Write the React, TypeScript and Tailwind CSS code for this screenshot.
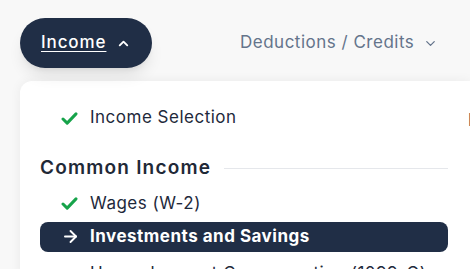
import { ChevronUp, ChevronDown, ArrowRight } from 'lucide-react';

function Check() {
  return (
    <svg viewBox="0 0 18 14" className="w-[17px] h-[13px]" fill="none">
      <path d="M2 7.5 L6.5 12 L16 2" stroke="#16a34a" strokeWidth="3.2" strokeLinecap="round" strokeLinejoin="round" />
    </svg>
  );
}

interface ItemProps {
  label: string;
  icon: 'check' | 'arrow' | 'dot';
  active?: boolean;
  className?: string;
}

function MenuItem({ label, icon, active, className = '' }: ItemProps) {
  return (
    <div
      className={`flex items-center h-[30px] rounded-lg pl-[21px] ${
        active ? 'bg-[#202e46] text-white font-bold' : 'text-[#1e293b]'
      } ${className}`}
    >
      <div className="w-[29px] flex items-center">
        {icon === 'check' && <Check />}
        {icon === 'arrow' && <ArrowRight className="w-[19px] h-[19px]" strokeWidth={2.4} />}
        {icon === 'dot' && <div className="ml-[10px] w-[5px] h-[5px] rounded-full bg-gray-400" />}
      </div>
      <span className="text-[17px] tracking-[0.5px] whitespace-nowrap">{label}</span>
    </div>
  );
}

export default function App() {
  return (
    <div className="w-[470px] h-[269px] overflow-hidden bg-[#f8f8f8] font-['Inter',sans-serif]">
      {/* Top nav */}
      <div className="flex items-center pt-[18px] pl-5">
        <button className="h-[50px] w-[132px] rounded-full bg-[#202e46] text-white flex items-center pl-[21px] gap-[10px] shadow-lg">
          <span className="text-[17px] font-medium tracking-[0.9px] underline underline-offset-[3px]">Income</span>
          <ChevronUp className="w-[15px] h-[15px]" strokeWidth={3} />
        </button>
        <div className="ml-[88px] flex items-center gap-[9px] text-[#64748b]">
          <span className="text-[17px] tracking-[0.5px]">Deductions / Credits</span>
          <ChevronDown className="w-[15px] h-[15px]" strokeWidth={2} />
        </div>
      </div>

      {/* Dropdown panel */}
      <div className="mt-[13px] ml-5 bg-white rounded-tl-xl shadow-[0_0_12px_rgba(0,0,0,0.06)] h-[200px] pl-5 pt-[22px] flex gap-5">
        <div className="w-[408px] shrink-0">
          <MenuItem label="Income Selection" icon="check" />
          <div className="flex items-center gap-[13px] mt-[21px] mb-[6px]">
            <span className="text-[19px] font-semibold tracking-[1.2px] text-[#1f2937] whitespace-nowrap">Common Income</span>
            <div className="flex-1 h-px bg-[#e5e7eb]" />
          </div>
          <div className="flex flex-col gap-[3px]">
            <MenuItem label="Wages (W-2)" icon="check" />
            <MenuItem label="Investments and Savings" icon="arrow" active />
            <MenuItem label="Unemployment Compensation (1099-G)" icon="dot" className="mt-[4px]" />
          </div>
        </div>
        <div className="shrink-0 pt-[5px] text-[17px] text-[#1e293b] whitespace-nowrap">
          Less Common Income
        </div>
      </div>
    </div>
  );
}
